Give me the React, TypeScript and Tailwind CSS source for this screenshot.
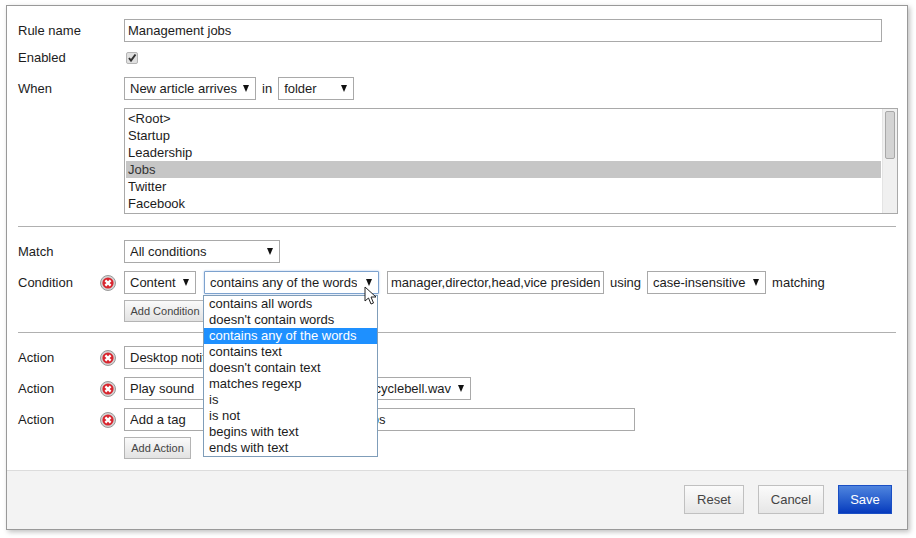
import React from "react";

const conditionOptions = [
  "contains all words",
  "doesn't contain words",
  "contains any of the words",
  "contains text",
  "doesn't contain text",
  "matches regexp",
  "is",
  "is not",
  "begins with text",
  "ends with text",
];

const folders = ["<Root>", "Startup", "Leadership", "Jobs", "Twitter", "Facebook"];

const Arrow = () => (
  <svg width="6" height="7" viewBox="0 0 6 7" className="shrink-0">
    <polygon points="0,0 6,0 3,7" fill="#111" />
  </svg>
);

const Select = ({
  label,
  className = "",
}: {
  label: string;
  className?: string;
}) => (
  <div
    className={`flex h-[23px] shrink-0 items-center justify-between gap-[6px] border bg-white pl-[5px] pr-[6px] whitespace-nowrap ${className}`}
  >
    <span className="min-w-0 overflow-hidden">{label}</span>
    <Arrow />
  </div>
);

const RemoveIcon = () => (
  <svg width="16" height="16" viewBox="0 0 16 16" className="shrink-0">
    <circle cx="8" cy="8" r="7.5" fill="#d4d4d4" stroke="#999" />
    <circle cx="8" cy="8" r="5.6" fill="#d8262f" />
    <path d="M5.4 5.4 L10.6 10.6 M10.6 5.4 L5.4 10.6" stroke="#fff" strokeWidth="2.3" />
  </svg>
);

const Label = ({ children }: { children: React.ReactNode }) => (
  <div className="w-[82px] shrink-0">{children}</div>
);

const AddButton = ({ children, className = "" }: { children: React.ReactNode; className?: string }) => (
  <button
    className={`h-[22px] border border-[#b4b4b4] bg-gradient-to-b from-[#fafafa] to-[#e2e2e2] text-[11px] text-[#444] ${className}`}
  >
    {children}
  </button>
);

const FooterButton = ({ children, className = "" }: { children: React.ReactNode; className?: string }) => (
  <button
    className={`h-[29px] border border-[#c0c0c0] bg-gradient-to-b from-[#fbfbfb] to-[#e6e6e6] text-[#444] ${className}`}
  >
    {children}
  </button>
);

const Divider = () => <div className="mr-[11px] h-px bg-[#b0b0b0]" />;

export default function App() {
  return (
    <div className="h-[538px] w-[916px] bg-white pl-[6px] pt-[5px] font-['Liberation_Sans',Arial,sans-serif] text-[13px] leading-[16px] text-[#1c1c1c]">
      <div className="flex h-[525px] w-[902px] flex-col border border-[#999] bg-white shadow-[2px_2px_5px_rgba(0,0,0,0.25)]">
        <div className="flex-1 pl-[11px] pt-[13px]">
          <div className="flex h-[23px] items-center">
            <div className="w-[106px] shrink-0">Rule name</div>
            <input
              readOnly
              value="Management jobs"
              className="h-[23px] w-[758px] border border-[#a9a9a9] px-[3px] outline-none"
            />
          </div>

          <div className="mt-[9px] flex h-[14px] items-center">
            <div className="w-[106px] shrink-0">Enabled</div>
            <div className="ml-[2px] flex h-[12px] w-[12px] items-center justify-center rounded-[2px] border border-[#b5b5b5] bg-[#e0e0e0]">
              <svg width="10" height="10" viewBox="0 0 10 10">
                <path d="M2 5 L4 7.5 L8.5 1.5" fill="none" stroke="#333" strokeWidth="2" />
              </svg>
            </div>
          </div>

          <div className="mt-[12px] flex h-[23px] items-center">
            <div className="w-[106px] shrink-0">When</div>
            <Select label="New article arrives" className="w-[132px] border-[#a9a9a9]" />
            <span className="mx-[6px]">in</span>
            <Select label="folder" className="w-[76px] border-[#a9a9a9]" />
          </div>

          <div className="ml-[106px] mt-[8px] flex h-[106px] w-[774px] border border-[#a9a9a9]">
            <ul className="flex-1 pl-[1px] pr-[1px] pt-[1px]">
              {folders.map((f) => (
                <li
                  key={f}
                  className={`h-[17px] pl-[2px] leading-[17px] ${f === "Jobs" ? "bg-[#c6c6c6] text-[#333]" : ""}`}
                >
                  {f}
                </li>
              ))}
            </ul>
            <div className="w-[15px] shrink-0 border-l border-[#e4e4e4] bg-[#f0f0f0] pl-[2px] pt-[2px]">
              <div className="h-[48px] w-[10px] rounded-[2px] border border-[#a8a8a8] bg-[#d4d4d4]" />
            </div>
          </div>

          <div className="mt-[12px]">
            <Divider />
          </div>

          <div className="mt-[13px] flex h-[23px] items-center">
            <div className="w-[106px] shrink-0">Match</div>
            <Select label="All conditions" className="w-[156px] border-[#a9a9a9]" />
          </div>

          <div className="mt-[8px] flex h-[23px] items-center">
            <Label>Condition</Label>
            <RemoveIcon />
            <div className="w-[8px]" />
            <Select label="Content" className="w-[72px] border-[#a9a9a9]" />
            <div className="relative ml-[8px]">
              <Select
                label="contains any of the words"
                className="w-[175px] rounded-[1px] border-[#7da2ce] shadow-[0_0_2px_#9dbce6]"
              />
              <div className="absolute left-[-1px] top-[24px] z-10 w-[175px] border border-[#7f9db9] bg-white">
                {conditionOptions.map((o) => (
                  <div
                    key={o}
                    className={`h-[16px] pl-[5px] leading-[16px] whitespace-nowrap ${
                      o === "contains any of the words" ? "bg-[#1e90ff] text-white" : ""
                    }`}
                  >
                    {o}
                  </div>
                ))}
              </div>
              <svg width="13" height="19" viewBox="0 0 13 19" className="absolute left-[160px] top-[15px] z-20">
                <path
                  d="M1 1 L1 15 L4.5 12 L7 18 L9.5 17 L7 11 L12 11 Z"
                  fill="#fff"
                  stroke="#222"
                  strokeWidth="1"
                  strokeLinejoin="round"
                />
              </svg>
            </div>
            <input
              readOnly
              value="manager,director,head,vice president"
              className="ml-[8px] h-[23px] w-[217px] border border-[#a9a9a9] px-[3px] outline-none"
            />
            <span className="mx-[6px]">using</span>
            <Select label="case-insensitive" className="w-[119px] border-[#a9a9a9]" />
            <span className="ml-[6px]">matching</span>
          </div>

          <AddButton className="ml-[106px] mt-[6px] w-[82px]">Add Condition</AddButton>

          <div className="mt-[10px]">
            <Divider />
          </div>

          <div className="mt-[13px] flex h-[23px] items-center">
            <Label>Action</Label>
            <RemoveIcon />
            <div className="w-[8px]" />
            <Select label="Desktop notification" className="w-[98px] border-[#a9a9a9]" />
          </div>

          <div className="mt-[8px] flex h-[23px] items-center">
            <Label>Action</Label>
            <RemoveIcon />
            <div className="w-[8px]" />
            <Select label="Play sound" className="w-[92px] border-[#a9a9a9]" />
            <Select label="C:\Sounds\notify\alerts\bicyclebell.wav" className="ml-[8px] w-[247px] border-[#a9a9a9]" />
          </div>

          <div className="mt-[8px] flex h-[23px] items-center">
            <Label>Action</Label>
            <RemoveIcon />
            <div className="w-[8px]" />
            <Select label="Add a tag" className="w-[92px] border-[#a9a9a9]" />
            <input
              readOnly
              value="management,manager,jobs"
              className="ml-[8px] h-[23px] w-[411px] border border-[#a9a9a9] px-[3px] outline-none"
            />
          </div>

          <AddButton className="ml-[106px] mt-[6px] w-[67px]">Add Action</AddButton>
        </div>

        <div className="flex h-[59px] items-start justify-end gap-[14px] border-t border-[#dcdcdc] bg-[#f3f3f3] pr-[15px] pt-[14px]">
          <FooterButton className="w-[60px]">Reset</FooterButton>
          <FooterButton className="w-[66px]">Cancel</FooterButton>
          <button className="h-[29px] w-[54px] border border-[#1a4fc4] bg-gradient-to-b from-[#4f84de] to-[#0639bd] text-white">
            Save
          </button>
        </div>
      </div>
    </div>
  );
}
